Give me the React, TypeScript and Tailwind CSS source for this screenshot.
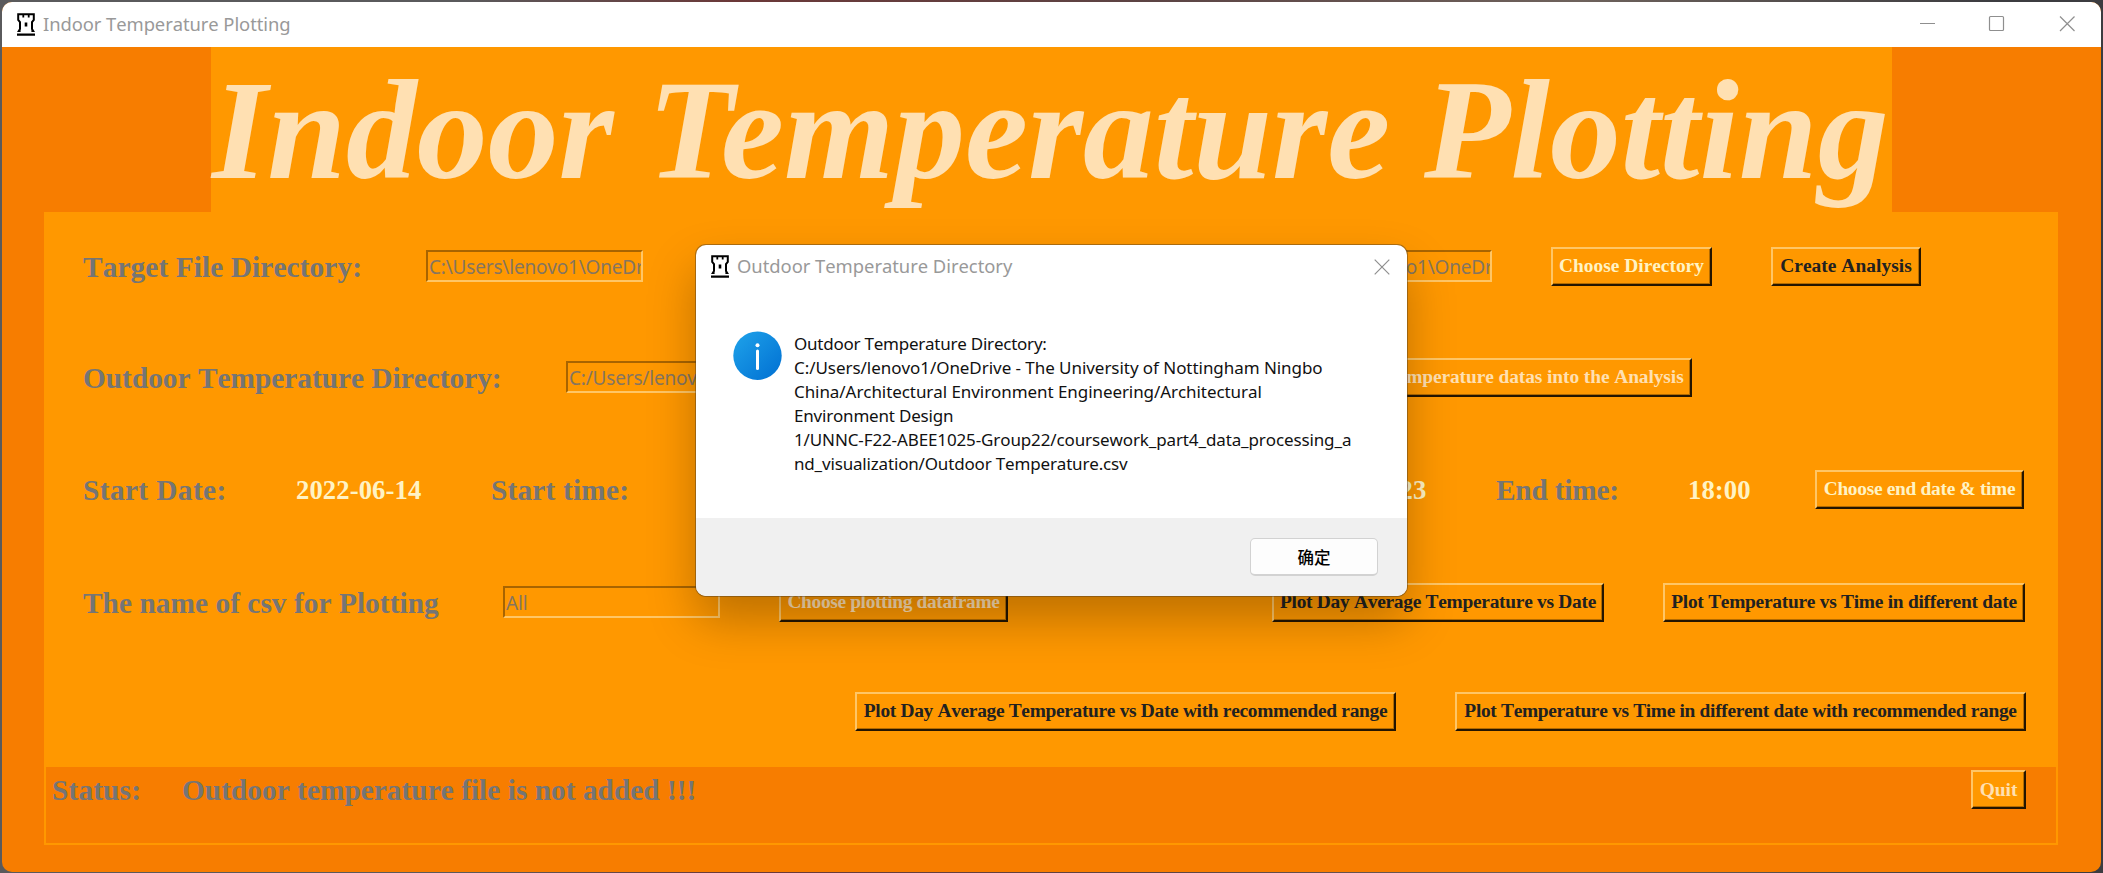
import React from "react";

const BEVEL = "border-2 border-t-[#ffc666] border-l-[#ffc666] border-b-[#241500] border-r-[#241500] shadow-[inset_-1px_-1px_0_#b36b00]";

function Btn({ text, className = "" }: { text: string; className?: string }) {
  return (
    <button
      className={`flex h-[39px] shrink-0 items-center justify-center overflow-hidden whitespace-nowrap bg-[#ff9800] text-[19.4px] font-bold leading-none ${BEVEL} ${className}`}
    >
      {text}
    </button>
  );
}

function Label({ text, className = "" }: { text: string; className?: string }) {
  return (
    <div className={`shrink-0 whitespace-nowrap pl-px pt-[3px] text-[29.33px] font-bold leading-none text-[#757575] ${className}`}>
      {text}
    </div>
  );
}

function Value({ text, className = "" }: { text: string; className?: string }) {
  return (
    <div className={`shrink-0 whitespace-nowrap pt-[2px] text-[26.67px] font-bold leading-none tracking-[0.1px] text-[#fff3c4] ${className}`}>
      {text}
    </div>
  );
}

function Entry({ text, className = "" }: { text: string; className?: string }) {
  return (
    <div
      className={`flex h-[32px] w-[217px] shrink-0 items-center overflow-hidden whitespace-nowrap border-2 border-t-[#a86400] border-l-[#a86400] border-b-[#ffc666] border-r-[#ffc666] pl-[1px] pt-[2px] font-['Noto_Sans',sans-serif] text-[19px] tracking-[-0.19px] text-[#857560] ${className}`}
    >
      {text}
    </div>
  );
}

function Rook({ className = "" }: { className?: string }) {
  return (
    <svg viewBox="0 0 18 23" className={`h-[23px] w-[18px] shrink-0 ${className}`} fill="none" stroke="#000" strokeWidth="2">
      <path d="M3.6 18H1.8L3 16V9L1.2 6.8V1.2h15.6v5.6L15 9v7l1.2 2h-1.8" />
      <path d="M6.3 1v3.4M11.7 1v3.4" strokeWidth="1.8" />
      <path d="M9 9.5v4" strokeWidth="2.6" />
      <path d="M0 21.6h18" strokeWidth="2.2" />
    </svg>
  );
}

export default function App() {
  return (
    <div className="relative h-[873px] w-[2103px] overflow-hidden bg-[linear-gradient(90deg,#5a5a5c_0%,#5a5a5c_22%,#6b3838_35%,#5c4444_55%,#6e625c_75%,#3c3c40_95%)] px-[2px] pt-[2px] pb-[1px] font-['Liberation_Serif',serif] [font-kerning:none]">
      <div className="flex h-[870px] w-[2099px] flex-col overflow-hidden rounded-[10px] bg-[#f77d00]">
        <header className="flex h-[45px] shrink-0 items-center bg-white pl-[15px]">
          <Rook />
          <div className="ml-[8px] whitespace-nowrap pb-[2px] font-['Noto_Sans',sans-serif] text-[18.4px] tracking-[-0.07px] text-[#999]">
            Indoor Temperature Plotting
          </div>
          <svg className="ml-auto h-[45px] w-[190px]" viewBox="0 0 190 45" fill="none" stroke="#8f8f8f" strokeWidth="1.2">
            <path d="M9 21.5h15" strokeWidth="1" />
            <rect x="78.5" y="14.5" width="14" height="14" rx="1" />
            <path d="M149 14.5l14.5 14.5M163.5 14.5l-14.5 14.5" />
          </svg>
        </header>

        <h1 className="mx-auto flex h-[165px] w-[1681px] shrink-0 items-center whitespace-nowrap bg-[#ff9800] pl-px pt-[3px] text-[141.7px] font-bold italic leading-none text-[#ffe0b2] [font-kerning:normal] [word-spacing:-1.5px]">
          Indoor Temperature Plotting
        </h1>

        <main className="ml-[42px] flex h-[555px] w-[2014px] shrink-0 flex-col bg-[#ff9800] pt-[34px]">
          <div className="flex h-[40px] items-center pl-[38px]">
            <Label text="Target File Directory:" className="w-[344px] tracking-[0.1px]" />
            <Entry text="C:\Users\lenovo1\OneDrive" />
            <Entry text="C:\Users\lenovo1\OneDrive" className="ml-[632px]" />
            <Btn text="Choose Directory" className="ml-[59px] w-[161px] text-[#fff3c4]" />
            <Btn text="Create Analysis" className="ml-[59px] w-[150px] tracking-[0.05px] text-[#212121]" />
          </div>
          <div className="mt-[71px] flex h-[40px] items-center pl-[38px]">
            <Label text="Outdoor Temperature Directory:" className="w-[484px]" />
            <Entry text="C:/Users/lenovo1/OneDrive" />
            <Btn text="Add Outdoor Temperature datas into the Analysis" className="ml-[478px] w-[431px] tracking-[-0.08px] text-[#ffe0b2]" />
          </div>
          <div className="mt-[72px] flex h-[40px] items-center pl-[38px]">
            <Label text="Start Date:" className="w-[213px] tracking-[0.4px]" />
            <Value text="2022-06-14" className="ml-px w-[194px]" />
            <Label text="Start time:" className="w-[811px] tracking-[0.2px]" />
            <Value text="2022-06-23" className="w-[194px]" />
            <Label text="End time:" className="w-[193px] tracking-[-0.2px]" />
            <Value text="18:00" className="w-[121px]" />
            <Btn text="Choose end date & time" className="ml-[6px] w-[209px] tracking-[-0.3px] text-[#fff3c4]" />
          </div>
          <div className="mt-[73px] flex h-[40px] items-center pl-[38px]">
            <Label text="The name of csv for Plotting" className="w-[421px] tracking-[0.05px]" />
            <Entry text="All" />
            <Btn text="Choose plotting dataframe" className="ml-[59px] w-[229px] tracking-[-0.35px] text-[#ffe0b2]" />
            <Btn text="Plot Day Average Temperature vs Date" className="ml-[264px] w-[332px] tracking-[-0.27px] text-[#212121]" />
            <Btn text="Plot Temperature vs Time in different date" className="ml-[59px] w-[362px] tracking-[-0.26px] text-[#212121]" />
          </div>
          <div className="mt-[69px] flex h-[40px] items-center justify-end gap-[59px] pr-[32px]">
            <Btn text="Plot Day Average Temperature vs Date with recommended range" className="w-[541px] tracking-[-0.31px] text-[#212121]" />
            <Btn text="Plot Temperature vs Time in different date with recommended range" className="w-[571px] tracking-[-0.31px] text-[#212121]" />
          </div>
        </main>

        <footer className="ml-[42px] flex h-[78px] w-[2014px] shrink-0 items-start border-2 border-t-0 border-[#ff9800] pl-[5px] pr-[30px] pt-[3px]">
          <Label text="Status:" className="mt-[3px] w-[130px] tracking-[0.15px]" />
          <Label text="Outdoor temperature file is not added !!!" className="mt-[3px] tracking-[0.03px]" />
          <Btn text="Quit" className="ml-auto w-[55px] text-[#ffe0b2]" />
        </footer>
      </div>

      <div className="absolute left-[696px] top-[245px] flex h-[351px] w-[711px] flex-col overflow-hidden rounded-[10px] bg-white font-['Noto_Sans',sans-serif] shadow-[0_0_0_1px_rgba(80,60,30,0.45),0_24px_48px_0_rgba(0,0,0,0.26)]">
        <div className="flex h-[43px] shrink-0 items-center pl-[15px] pr-[17px]">
          <Rook />
          <div className="ml-[8px] whitespace-nowrap pb-[1px] text-[18.4px] tracking-[-0.03px] text-[#999]">Outdoor Temperature Directory</div>
          <svg className="ml-auto h-[16px] w-[16px]" viewBox="0 0 16 16" fill="none" stroke="#8f8f8f" strokeWidth="1.2">
            <path d="M.7.7l14.6 14.6M15.3.7L.7 15.3" />
          </svg>
        </div>
        <div className="flex grow pl-[37px] pt-[43px]">
          <svg className="h-[49px] w-[49px] shrink-0" viewBox="0 0 49 49">
            <defs>
              <linearGradient id="info" x1="0" y1="0" x2="1" y2="1">
                <stop offset="0" stopColor="#1fa3ea" />
                <stop offset="1" stopColor="#006fd2" />
              </linearGradient>
            </defs>
            <circle cx="24.5" cy="24.7" r="24.2" fill="url(#info)" />
            <circle cx="24.5" cy="14.3" r="2" fill="#fff" />
            <path d="M24.5 20v17.6" stroke="#fff" strokeWidth="3" strokeLinecap="round" />
          </svg>
          <div className="ml-[12px] mt-[1px] whitespace-nowrap text-[17px] leading-[24px] text-[#111]">
            <p className="tracking-[-0.24px]">Outdoor Temperature Directory:</p>
            <p className="tracking-[-0.05px]">C:/Users/lenovo1/OneDrive - The University of Nottingham Ningbo</p>
            <p className="tracking-[-0.07px]">China/Architectural Environment Engineering/Architectural</p>
            <p className="tracking-[-0.2px]">Environment Design</p>
            <p className="tracking-[-0.12px]">1/UNNC-F22-ABEE1025-Group22/coursework_part4_data_processing_a</p>
            <p className="tracking-[-0.17px]">nd_visualization/Outdoor Temperature.csv</p>
          </div>
        </div>
        <div className="flex h-[78px] shrink-0 items-center justify-end bg-[#f0f0f0] pr-[29px]">
          <button className="h-[38px] w-[128px] rounded-[5px] border border-b-2 border-[#d2d2d2] bg-[#fdfdfd] pt-px font-['Noto_Sans_CJK_SC',sans-serif] text-[16.5px] font-medium leading-none text-black">
            确定
          </button>
        </div>
      </div>
    </div>
  );
}
